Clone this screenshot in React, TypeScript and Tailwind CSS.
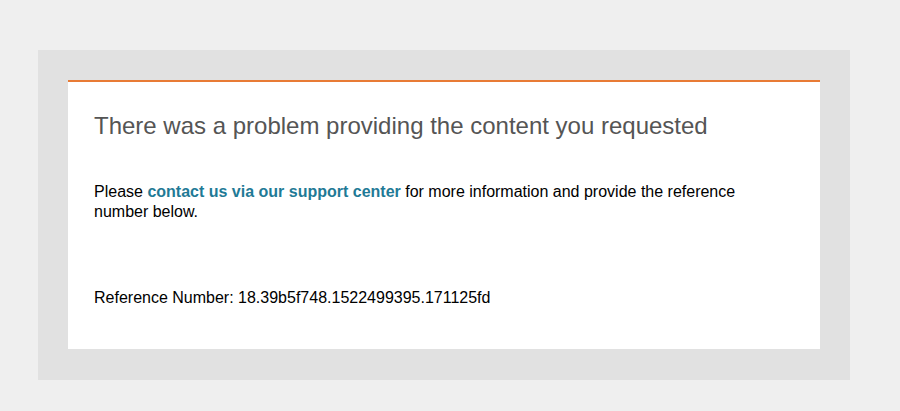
export default function App() {
  return (
    <div className="min-h-[411px] bg-[#efefef] pt-[50px] pl-[38px]" style={{ fontFamily: '"Liberation Sans", Arial, sans-serif' }}>
      <div className="w-[812px] bg-[#e1e1e1] pt-[30px] px-[30px] pb-[31px]">
        <div className="bg-white border-t-2 border-[#e87b35] pl-[26px] pr-[60px] pt-[30px] min-h-[269px]">
          <h1 className="text-[24px] leading-[28px] text-[#555555] font-normal whitespace-nowrap">There was a problem providing the content you requested</h1>
          <p className="mt-[42px] text-[16px] leading-[20px] text-black">
            Please <span className="font-bold text-[#1f7a96]">contact us via our support center</span> for more information and provide the reference number below.
          </p>
          <p className="mt-[66px] text-[16px] leading-[20px] text-black">Reference Number: 18.39b5f748.1522499395.171125fd</p>
        </div>
      </div>
    </div>
  );
}
